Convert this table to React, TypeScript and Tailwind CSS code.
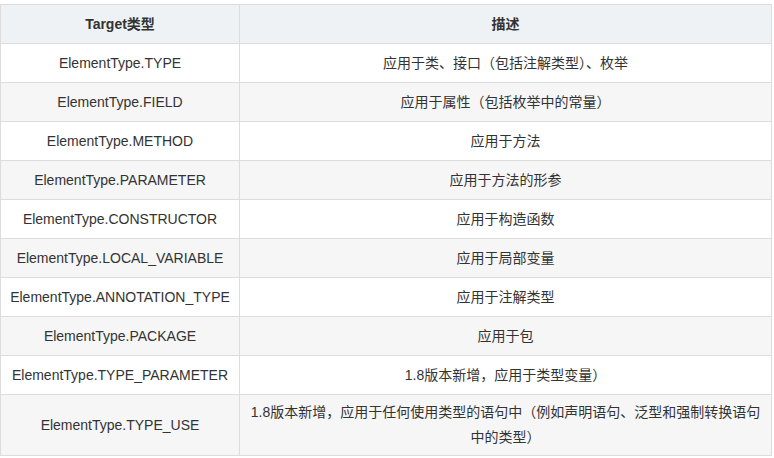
import React from "react";

type Row = {
  target: string;
  desc: string;
};

const rows: Row[] = [
  { target: "ElementType.TYPE", desc: "应用于类、接口（包括注解类型）、枚举" },
  { target: "ElementType.FIELD", desc: "应用于属性（包括枚举中的常量）" },
  { target: "ElementType.METHOD", desc: "应用于方法" },
  { target: "ElementType.PARAMETER", desc: "应用于方法的形参" },
  { target: "ElementType.CONSTRUCTOR", desc: "应用于构造函数" },
  { target: "ElementType.LOCAL_VARIABLE", desc: "应用于局部变量" },
  { target: "ElementType.ANNOTATION_TYPE", desc: "应用于注解类型" },
  { target: "ElementType.PACKAGE", desc: "应用于包" },
  { target: "ElementType.TYPE_PARAMETER", desc: "1.8版本新增，应用于类型变量）" },
  {
    target: "ElementType.TYPE_USE",
    desc: "1.8版本新增，应用于任何使用类型的语句中（例如声明语句、泛型和强制转换语句中的类型）",
  },
];

export default function App() {
  return (
    <div className="w-[774px] h-[458px] bg-white pt-[4px] font-['Liberation_Sans','Noto_Sans_CJK_SC',sans-serif] text-[14px] text-[#333]">
      <table className="w-[772px] border-collapse table-fixed">
        <colgroup>
          <col className="w-[239px]" />
          <col />
        </colgroup>
        <thead>
          <tr className="bg-[#eff2f5]">
            <th className="border border-[#ddd] h-[39px] px-[10px] font-bold text-center">Target类型</th>
            <th className="border border-[#ddd] h-[39px] px-[10px] font-bold text-center">描述</th>
          </tr>
        </thead>
        <tbody>
          {rows.map((row, index) => {
            const last = index === rows.length - 1;
            return (
              <tr key={index} className={index % 2 === 1 ? "bg-[#f6f6f6]" : "bg-white"}>
                <td className={`border border-[#ddd] px-[6px] text-center ${last ? "h-[61px]" : "h-[39px]"}`}>
                  {row.target}
                </td>
                <td
                  className={`border border-[#ddd] px-[4px] text-center ${
                    last ? "h-[61px] leading-[25px]" : "h-[39px]"
                  }`}
                >
                  {row.desc}
                </td>
              </tr>
            );
          })}
        </tbody>
      </table>
    </div>
  );
}
